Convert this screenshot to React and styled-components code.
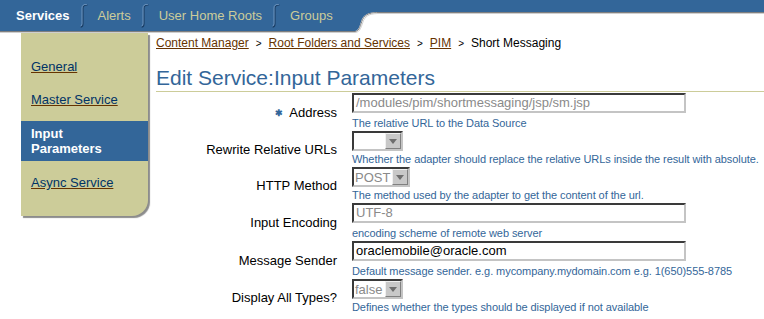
import React from "react";
import styled, { createGlobalStyle } from "styled-components";

const GlobalStyle = createGlobalStyle`
  html, body {
    margin: 0;
    padding: 0;
    background: #ffffff;
    font-family: "Liberation Sans", Arial, sans-serif;
  }
`;

const Page = styled.div`
  width: 764px;
  height: 319px;
  overflow: hidden;
  background: #fff;
`;

const Header = styled.div`
  display: flex;
  align-items: flex-start;
  height: 33px;
`;

const TabBar = styled.div`
  display: flex;
  align-items: center;
  flex-shrink: 0;
  width: 339px;
  height: 31px;
  padding-left: 16px;
  background: #336699;
  border-bottom: 1px solid #7f7f7f;
  box-shadow: 0 1px 0 #cfcfcf;
`;

const Tab = styled.span`
  font-size: 13px;
  margin: 0 10px;
  color: ${(p) => (p.$active ? "#ffffff" : "#cccc99")};
  font-weight: ${(p) => (p.$active ? "bold" : "normal")};
  &:first-child {
    margin-left: 0;
  }
`;

const Strip = styled.div`
  flex: 1;
  height: 12px;
  background: #336699;
  border-bottom: 1px solid #7f7f7f;
  box-shadow: 0 1px 0 #cfcfcf;
`;

const Body = styled.div`
  display: flex;
  align-items: flex-start;
`;

const Sidebar = styled.nav`
  display: flex;
  flex-direction: column;
  flex-shrink: 0;
  width: 127px;
  height: 166px;
  margin-left: 21px;
  padding: 17px 0 0;
  background: #cccc99;
  border-bottom-right-radius: 16px;
  box-shadow: 2px 2px 1px #8c8c8c;
`;

const SideItem = styled.a`
  display: block;
  padding: ${(p) => (p.$active ? "5px 10px" : "9px 10px")};
  margin: ${(p) => (p.$active ? "5px 0" : "0")};
  font-size: 13px;
  line-height: 15px;
  color: ${(p) => (p.$active ? "#ffffff" : "#003366")};
  font-weight: ${(p) => (p.$active ? "bold" : "normal")};
  background: ${(p) => (p.$active ? "#336699" : "transparent")};
  text-decoration: ${(p) => (p.$active ? "none" : "underline")};
  text-decoration-color: #663300;
`;

const Main = styled.main`
  flex: 1;
  min-width: 0;
  margin-left: 8px;
  padding-top: 2px;
`;

const Crumbs = styled.div`
  font-size: 12px;
  line-height: 16px;
  color: #000;
`;

const CrumbLink = styled.a`
  color: #663300;
  text-decoration: underline;
`;

const CrumbSep = styled.span`
  font-size: 10px;
  margin: 0 7px;
`;

const Title = styled.h1`
  margin: 14px 0 0;
  padding-bottom: 1px;
  font-size: 21px;
  line-height: 24px;
  font-weight: normal;
  color: #336699;
  border-bottom: 1px solid #cccc99;
`;

const Form = styled.div`
  display: grid;
  grid-template-columns: 181px 1fr;
  column-gap: 15px;
  margin-top: 1px;
`;

const Label = styled.div`
  align-self: center;
  text-align: right;
  font-size: 13px;
  color: #000;
  white-space: nowrap;
`;

const Required = styled.span`
  color: #336699;
  font-size: 9px;
  font-weight: bold;
  margin-right: 6px;
  vertical-align: 1px;
`;

const Field = styled.div`
  display: flex;
  flex-direction: column;
  align-items: flex-start;
`;

const TextBox = styled.div`
  box-sizing: border-box;
  width: 334px;
  height: 20px;
  margin-bottom: 2px;
  padding: 0 2px;
  border: 2px solid;
  border-color: #3a3a3a #c4c4c4 #c4c4c4 #3a3a3a;
  font-size: 13px;
  line-height: 16px;
  color: ${(p) => (p.$disabled ? "#8a8a8a" : "#000")};
  background: #fff;
  white-space: nowrap;
`;

const Select = styled.div`
  box-sizing: border-box;
  display: flex;
  align-items: center;
  justify-content: space-between;
  width: ${(p) => p.$w}px;
  height: 20px;
  border: 2px solid;
  border-color: #3a3a3a #c4c4c4 #c4c4c4 #3a3a3a;
  background: #fff;
  font-size: 13px;
  color: #8a8a8a;
  padding-left: 1px;
`;

const DropButton = styled.span`
  box-sizing: border-box;
  display: flex;
  align-items: center;
  justify-content: center;
  width: 16px;
  height: 16px;
  background: #c8c8c8;
  border: 1px solid;
  border-color: #f0f0f0 #808080 #808080 #f0f0f0;
`;

const Help = styled.div`
  font-size: 11px;
  line-height: 16px;
  letter-spacing: -0.07px;
  color: #336699;
  white-space: nowrap;
`;

const Separator = () => (
  <svg width="8" height="24" viewBox="0 0 8 24">
    <path d="M0.5 23 Q3 23 3 20 V4 Q3 1 7.5 1" fill="none" stroke="#1c3f66" strokeWidth="1.2" />
    <path d="M0.5 22 Q2 22 2 19.5 V4 Q2 0.2 7 0.2" fill="none" stroke="#7fa3cc" strokeWidth="0.8" />
  </svg>
);

const Curve = () => (
  <svg width="25" height="33" viewBox="0 0 25 33" style={{ display: "block", flexShrink: 0 }}>
    <path d="M0 0 H25 V12 C16 12 10 13 7 19 C5 24 4 31 0 31 Z" fill="#336699" />
    <path d="M25 12.5 C16 12.5 10.5 13.5 7.5 19.5 C5.5 24.5 4.5 31.5 0 31.5" fill="none" stroke="#7f7f7f" strokeWidth="1" />
    <path d="M25 13.5 C16.5 13.5 11.5 14.5 8.5 20.5 C6.5 25.5 5.5 32.5 0 32.5" fill="none" stroke="#cfcfcf" strokeWidth="1" />
  </svg>
);

const Arrow = () => (
  <svg width="8" height="5" viewBox="0 0 8 5">
    <path d="M0 0 H8 L4 5 Z" fill="#6e6e6e" />
  </svg>
);

const rows = [
  { label: "Address", required: true, type: "text", value: "/modules/pim/shortmessaging/jsp/sm.jsp", disabled: true, help: "The relative URL to the Data Source" },
  { label: "Rewrite Relative URLs", type: "select", value: "", w: 51, help: "Whether the adapter should replace the relative URLs inside the result with absolute." },
  { label: "HTTP Method", type: "select", value: "POST", w: 58, help: "The method used by the adapter to get the content of the url." },
  { label: "Input Encoding", type: "text", value: "UTF-8", disabled: true, help: "encoding scheme of remote web server" },
  { label: "Message Sender", type: "text", value: "oraclemobile@oracle.com", help: "Default message sender. e.g. mycompany.mydomain.com e.g. 1(650)555-8785" },
  { label: "Display All Types?", type: "select", value: "false", w: 51, help: "Defines whether the types should be displayed if not available" },
];

export default function App() {
  return (
    <Page>
      <GlobalStyle />
      <Header>
        <TabBar>
          <Tab $active>Services</Tab>
          <Separator />
          <Tab>Alerts</Tab>
          <Separator />
          <Tab>User Home Roots</Tab>
          <Separator />
          <Tab>Groups</Tab>
        </TabBar>
        <Curve />
        <Strip />
      </Header>
      <Body>
        <Sidebar>
          <SideItem>General</SideItem>
          <SideItem>Master Service</SideItem>
          <SideItem $active>
            Input
            <br />
            Parameters
          </SideItem>
          <SideItem>Async Service</SideItem>
        </Sidebar>
        <Main>
          <Crumbs>
            <CrumbLink>Content Manager</CrumbLink>
            <CrumbSep>&gt;</CrumbSep>
            <CrumbLink>Root Folders and Services</CrumbLink>
            <CrumbSep>&gt;</CrumbSep>
            <CrumbLink>PIM</CrumbLink>
            <CrumbSep>&gt;</CrumbSep>
            Short Messaging
          </Crumbs>
          <Title>Edit Service:Input Parameters</Title>
          <Form>
            {rows.map((r) => (
              <React.Fragment key={r.label}>
                <Label>
                  {r.required && <Required>✱</Required>}
                  {r.label}
                </Label>
                <Field>
                  {r.type === "text" ? (
                    <TextBox $disabled={r.disabled}>{r.value}</TextBox>
                  ) : (
                    <Select $w={r.w}>
                      <span>{r.value}</span>
                      <DropButton>
                        <Arrow />
                      </DropButton>
                    </Select>
                  )}
                  <Help>{r.help}</Help>
                </Field>
              </React.Fragment>
            ))}
          </Form>
        </Main>
      </Body>
    </Page>
  );
}
